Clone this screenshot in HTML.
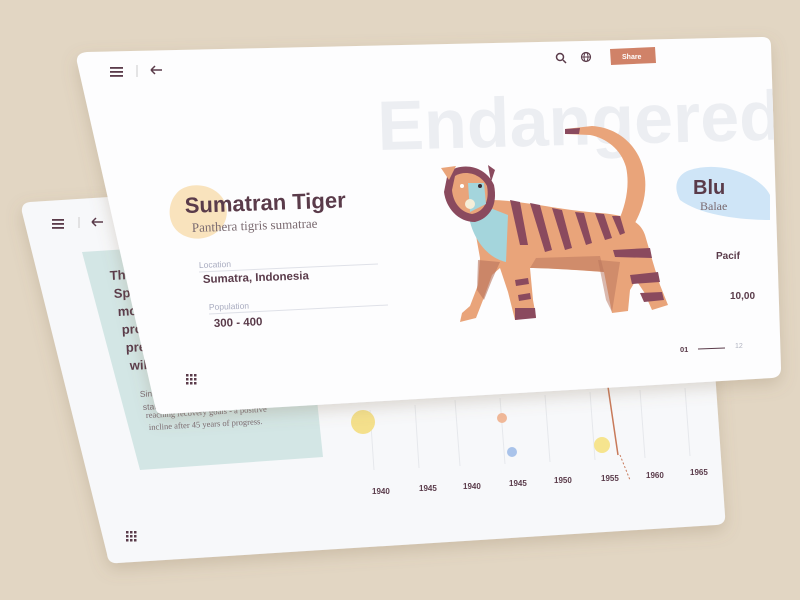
<!DOCTYPE html>
<html><head><meta charset="utf-8"><style>
html,body{margin:0;padding:0;width:800px;height:600px;overflow:hidden;background:#e2d6c3}
svg{display:block}
text{font-family:"Liberation Sans",sans-serif}
.serif{font-family:"Liberation Serif",serif}
</style></head><body>
<svg width="800" height="600" viewBox="0 0 800 600" xmlns="http://www.w3.org/2000/svg">
<defs>
<filter id="sh" x="-10%" y="-10%" width="120%" height="130%"><feDropShadow dx="0" dy="6" stdDeviation="8" flood-color="#8a7456" flood-opacity="0.25"/></filter>
</defs>
<rect width="800" height="600" fill="#e2d6c3"/>
<!-- back card -->
<path d="M30,202 L690,160 Q700,160 701,170 L725,515 Q726,524 716,525 L118,563 Q108,564 107,554 L22,212 Q21,203 30,202Z" fill="#f7f8fa" filter="url(#sh)"/>
<path d="M82,252 L300,238 L323,457 L140,470Z" fill="#d3e6e5"/>
<g fill="#5a3b4a" font-weight="bold" font-size="13">
<text x="110" y="280" transform="rotate(-3 110 280)">The</text>
<text x="114" y="298" transform="rotate(-3 114 298)">Spe</text>
<text x="118" y="316" transform="rotate(-3 118 316)">mo</text>
<text x="122" y="334" transform="rotate(-3 122 334)">pro</text>
<text x="126" y="352" transform="rotate(-3 126 352)">pre</text>
<text x="130" y="370" transform="rotate(-3 130 370)">wil</text>
<text x="134" y="370" transform="rotate(-3 134 370)"></text>
</g>
<g class="serif" fill="#7a6a70" font-size="8.5">
<text x="140" y="397" transform="rotate(-3 140 397)">Since</text>
<text x="143" y="410" transform="rotate(-3 143 410)">stab</text>
<text x="146" y="418" class="serif" transform="rotate(-3 146 418)">reaching recovery goals - a positive</text>
<text x="149" y="430" class="serif" transform="rotate(-3 149 430)">incline after 45 years of progress.</text>
</g>
<g stroke="#e6e8ec" stroke-width="1">
<line x1="370" y1="410" x2="374" y2="470"/><line x1="415" y1="405" x2="419" y2="468"/><line x1="455" y1="400" x2="460" y2="466"/><line x1="500" y1="398" x2="505" y2="464"/><line x1="545" y1="395" x2="550" y2="462"/><line x1="590" y1="392" x2="595" y2="460"/><line x1="640" y1="390" x2="645" y2="458"/><line x1="685" y1="388" x2="690" y2="456"/>
</g>
<line x1="607" y1="380" x2="618" y2="455" stroke="#c87a5a" stroke-width="1.5"/>
<line x1="620" y1="455" x2="630" y2="480" stroke="#c87a5a" stroke-width="1" stroke-dasharray="2 2"/>
<circle cx="363" cy="422" r="12" fill="#f4e08c"/>
<circle cx="502" cy="418" r="5" fill="#f0b898"/>
<circle cx="512" cy="452" r="5" fill="#a9c3ea"/>
<circle cx="602" cy="445" r="8" fill="#f6e48e"/>
<g fill="#5a3b4a" font-weight="bold" font-size="8">
<text x="372" y="494">1940</text><text x="419" y="491">1945</text><text x="463" y="489">1940</text><text x="509" y="486">1945</text><text x="554" y="483">1950</text><text x="601" y="481">1955</text><text x="646" y="478">1960</text><text x="690" y="475">1965</text>
</g>
<g fill="#5a3b4a"><rect x="52" y="219" width="12" height="1.8"/><rect x="52" y="223" width="12" height="1.8"/><rect x="52" y="227" width="12" height="1.8"/></g>
<line x1="79" y1="217" x2="79" y2="228" stroke="#ccc"/>
<path d="M92,222 L103,222 M92,222 L96,218 M92,222 L96,226" stroke="#5a3b4a" stroke-width="1.5" fill="none"/>
<g fill="#5a3b4a"><rect x="126" y="531" width="2.5" height="2.5"/><rect x="130" y="531" width="2.5" height="2.5"/><rect x="134" y="531" width="2.5" height="2.5"/><rect x="126" y="535" width="2.5" height="2.5"/><rect x="130" y="535" width="2.5" height="2.5"/><rect x="134" y="535" width="2.5" height="2.5"/><rect x="126" y="539" width="2.5" height="2.5"/><rect x="130" y="539" width="2.5" height="2.5"/><rect x="134" y="539" width="2.5" height="2.5"/></g>

<!-- front card -->
<path d="M87,52 L762,37 Q771,37 771,46 L781,368 Q781,377 772,378 L165,414 Q156,415 155,406 L77,62 Q76,53 87,52Z" fill="#fdfdfe" filter="url(#sh)"/>
<clipPath id="fc"><path d="M87,52 L762,37 Q771,37 771,46 L781,368 Q781,377 772,378 L165,414 Q156,415 155,406 L77,62 Q76,53 87,52Z"/></clipPath>
<g clip-path="url(#fc)">
<text x="378" y="150" font-size="70" font-weight="bold" fill="#eceef2" transform="rotate(-1.5 378 150)">Endangered</text>
<path d="M690,170 C720,160 760,175 770,195 L770,220 C740,220 700,215 680,200 C672,185 678,174 690,170Z" fill="#cfe5f7"/>
<text x="693" y="194" font-size="20" font-weight="bold" fill="#5a3b4a">Blu</text>
<text x="700" y="210" class="serif" font-size="12" fill="#7a6a70">Balae</text>
<text x="716" y="259" font-size="10" font-weight="bold" fill="#5a3b4a">Pacif</text>
<text x="730" y="299" font-size="10" font-weight="bold" fill="#5a3b4a">10,00</text>
</g>
<path d="M180,190 C195,180 220,186 226,205 C232,230 205,245 185,236 C166,228 165,202 180,190Z" fill="#f9e3bd"/>
<text x="185" y="213" font-size="22" font-weight="bold" fill="#5a3b4a" transform="rotate(-2 185 213)">Sumatran Tiger</text>
<text x="192" y="232" class="serif" font-size="13" fill="#7a6a70" transform="rotate(-2 192 232)">Panthera tigris sumatrae</text>
<text x="199" y="268" font-size="8.5" fill="#a9acc0" transform="rotate(-2 199 268)">Location</text>
<line x1="199" y1="272" x2="378" y2="264" stroke="#dfe1e8"/>
<text x="203" y="283" font-size="11.5" font-weight="bold" fill="#5a3b4a" transform="rotate(-2 203 283)">Sumatra, Indonesia</text>
<text x="209" y="310" font-size="8.5" fill="#a9acc0" transform="rotate(-2 209 310)">Population</text>
<line x1="209" y1="314" x2="388" y2="305" stroke="#dfe1e8"/>
<text x="214" y="327" font-size="11.5" font-weight="bold" fill="#5a3b4a" transform="rotate(-2 214 327)">300 - 400</text>
<g fill="#5a3b4a"><rect x="186" y="374" width="2.5" height="2.5"/><rect x="190" y="374" width="2.5" height="2.5"/><rect x="194" y="374" width="2.5" height="2.5"/><rect x="186" y="378" width="2.5" height="2.5"/><rect x="190" y="378" width="2.5" height="2.5"/><rect x="194" y="378" width="2.5" height="2.5"/><rect x="186" y="382" width="2.5" height="2.5"/><rect x="190" y="382" width="2.5" height="2.5"/><rect x="194" y="382" width="2.5" height="2.5"/></g>
<g fill="#5a3b4a"><rect x="110" y="67" width="13" height="1.8"/><rect x="110" y="71" width="13" height="1.8"/><rect x="110" y="75" width="13" height="1.8"/></g>
<line x1="137" y1="65" x2="137" y2="77" stroke="#ccc"/>
<path d="M151,70 L162,70 M151,70 L155,66 M151,70 L155,74" stroke="#5a3b4a" stroke-width="1.5" fill="none"/>
<circle cx="560" cy="57" r="3.5" fill="none" stroke="#5a3b4a" stroke-width="1.5"/><line x1="563" y1="60" x2="566" y2="63" stroke="#5a3b4a" stroke-width="1.5"/>
<circle cx="586" cy="57" r="4.5" fill="none" stroke="#5a3b4a" stroke-width="1.2"/><ellipse cx="586" cy="57" rx="2" ry="4.5" fill="none" stroke="#5a3b4a" stroke-width="1"/><line x1="581.5" y1="57" x2="590.5" y2="57" stroke="#5a3b4a"/>
<path d="M610,49 L655,47 L656,63 L611,65Z" fill="#d08268"/>
<text x="622" y="59" font-size="7" fill="#fff" font-weight="bold">Share</text>
<text x="680" y="352" font-size="7.5" font-weight="bold" fill="#5a3b4a">01</text>
<line x1="698" y1="349" x2="725" y2="348" stroke="#5a3b4a"/>
<text x="735" y="348" font-size="7" fill="#b0b3c0">12</text>
<!-- tiger -->
<g>
<!-- tail -->
<path d="M565,129 L592,126 C622,128 642,150 645,178 C647,198 640,215 632,228 L618,222 C626,205 630,185 626,167 C621,149 606,138 590,135 L565,134Z" fill="#e9a47a"/>
<path d="M565,129 L580,128 L579,134 L565,134Z" fill="#8a4a5e"/>
<!-- body -->
<path d="M490,200 C520,200 560,210 600,213 C625,215 640,220 645,235 C650,252 655,270 660,285 L668,305 L652,310 L644,292 L636,280 L630,290 L628,311 L612,313 L604,272 C575,270 545,268 530,268 L533,300 L536,317 L515,320 L508,292 L500,268 L492,275 L483,300 L476,318 L460,322 L462,313 L470,306 L478,285 L480,258 L475,230Z" fill="#e9a47a"/>
<!-- dotted shade -->
<path d="M478,260 L500,262 L492,280 L484,300 L477,290Z" fill="#b7735c" opacity="0.6"/>
<path d="M536,258 L600,256 L604,272 C580,270 545,268 530,268Z" fill="#b7735c" opacity="0.5"/>
<path d="M598,260 L620,262 L612,312 L606,300Z" fill="#b7735c" opacity="0.5"/>
<!-- chest -->
<path d="M468,212 C472,240 488,258 506,262 L508,215 L485,206Z" fill="#a4d5dc"/>
<g fill="#8a4a5e">
<path d="M510,200 L520,245 L528,245 L520,202Z"/><path d="M530,203 L545,252 L552,250 L540,205Z"/><path d="M552,208 L565,250 L572,248 L562,210Z"/><path d="M575,212 L586,245 L592,243 L584,213Z"/><path d="M595,213 L605,240 L612,238 L604,214Z"/><path d="M612,216 L620,235 L625,233 L620,216Z"/>
<path d="M613,250 L650,248 L652,258 L615,257Z"/><path d="M630,275 L658,272 L660,282 L632,284Z"/><path d="M515,308 L535,308 L536,318 L515,320Z"/>
<path d="M515,280 L528,278 L529,284 L516,286Z"/><path d="M518,295 L530,293 L531,299 L519,301Z"/>
<path d="M640,293 L662,292 L664,300 L644,302Z"/>
</g>
<!-- head -->
<path d="M448,172 C462,162 485,165 494,185 C498,205 490,218 475,222 C458,222 446,208 444,192Z" fill="#8a4a5e"/>
<path d="M455,176 C465,170 480,173 487,186 C490,202 483,212 472,214 C460,212 453,202 452,190Z" fill="#e9a47a"/>
<path d="M441,168 L456,166 L449,180Z" fill="#e9a47a"/><path d="M488,165 L495,170 L491,182Z" fill="#8a4a5e"/>
<path d="M468,183 L484,183 L486,204 L470,212Z" fill="#a4d5dc"/>
<circle cx="470" cy="204" r="5" fill="#f5eed8"/>
<circle cx="462" cy="186" r="2" fill="#fff"/><circle cx="480" cy="186" r="2" fill="#3a2a33"/>
</g>
</svg>
</body></html>
